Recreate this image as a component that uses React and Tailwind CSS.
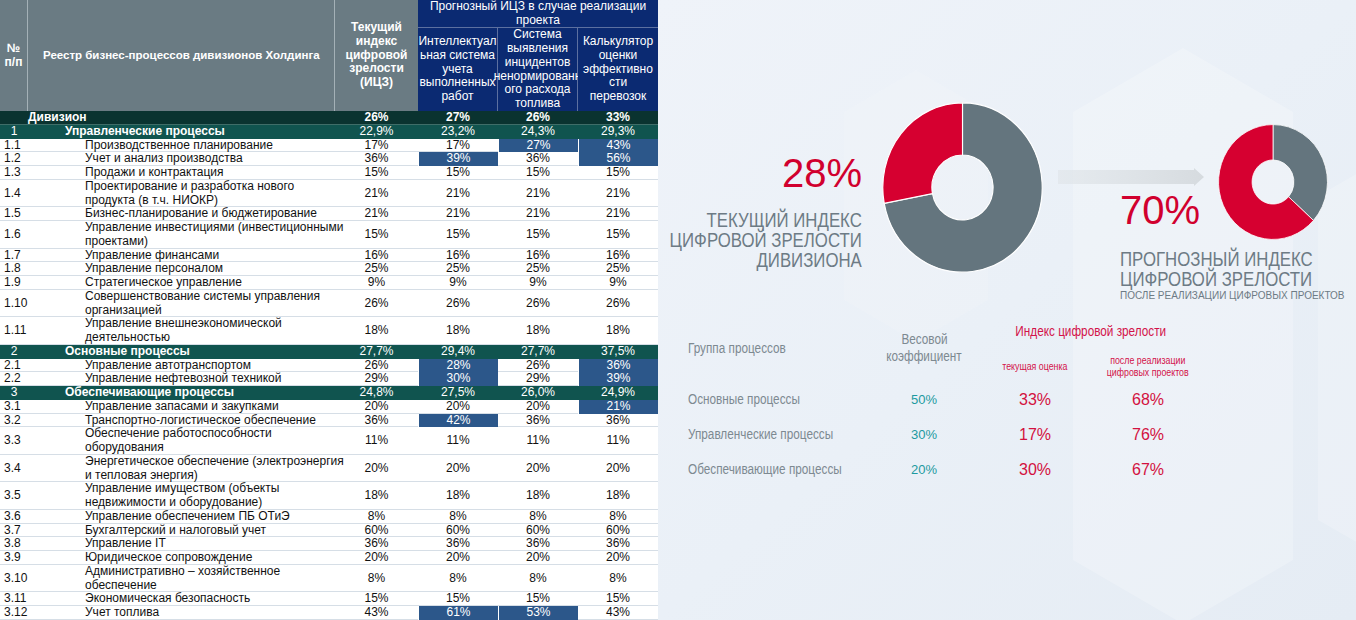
import React from 'react'

const ARIAL = { fontFamily: "'Liberation Sans', Arial, sans-serif" }

const rows = [
  { kind: 'div', name: 'Дивизион', v: ['26%', '27%', '26%', '33%'] },
  { kind: 'grp', n: '1', name: 'Управленческие процессы', v: ['22,9%', '23,2%', '24,3%', '29,3%'] },
  { n: '1.1', name: ['Производственное планирование'], v: ['17%', '17%', '27%', '43%'], hl: [2, 3] },
  { n: '1.2', name: ['Учет и анализ производства'], v: ['36%', '39%', '36%', '56%'], hl: [1, 3] },
  { n: '1.3', name: ['Продажи и контрактация'], v: ['15%', '15%', '15%', '15%'] },
  { n: '1.4', name: ['Проектирование и разработка нового', 'продукта (в т.ч. НИОКР)'], v: ['21%', '21%', '21%', '21%'] },
  { n: '1.5', name: ['Бизнес-планирование и бюджетирование'], v: ['21%', '21%', '21%', '21%'] },
  { n: '1.6', name: ['Управление инвестициями (инвестиционными', 'проектами)'], v: ['15%', '15%', '15%', '15%'] },
  { n: '1.7', name: ['Управление финансами'], v: ['16%', '16%', '16%', '16%'] },
  { n: '1.8', name: ['Управление персоналом'], v: ['25%', '25%', '25%', '25%'] },
  { n: '1.9', name: ['Стратегическое управление'], v: ['9%', '9%', '9%', '9%'] },
  { n: '1.10', name: ['Совершенствование системы управления', 'организацией'], v: ['26%', '26%', '26%', '26%'] },
  { n: '1.11', name: ['Управление внешнеэкономической', 'деятельностью'], v: ['18%', '18%', '18%', '18%'] },
  { kind: 'grp', n: '2', name: 'Основные процессы', v: ['27,7%', '29,4%', '27,7%', '37,5%'] },
  { n: '2.1', name: ['Управление автотранспортом'], v: ['26%', '28%', '26%', '36%'], hl: [1, 3] },
  { n: '2.2', name: ['Управление нефтевозной техникой'], v: ['29%', '30%', '29%', '39%'], hl: [1, 3] },
  { kind: 'grp', n: '3', name: 'Обеспечивающие процессы', v: ['24,8%', '27,5%', '26,0%', '24,9%'] },
  { n: '3.1', name: ['Управление запасами и закупками'], v: ['20%', '20%', '20%', '21%'], hl: [3] },
  { n: '3.2', name: ['Транспортно-логистическое обеспечение'], v: ['36%', '42%', '36%', '36%'], hl: [1] },
  { n: '3.3', name: ['Обеспечение работоспособности', 'оборудования'], v: ['11%', '11%', '11%', '11%'] },
  { n: '3.4', name: ['Энергетическое обеспечение (электроэнергия', 'и тепловая энергия)'], v: ['20%', '20%', '20%', '20%'] },
  { n: '3.5', name: ['Управление имуществом (объекты', 'недвижимости и оборудование)'], v: ['18%', '18%', '18%', '18%'] },
  { n: '3.6', name: ['Управление обеспечением ПБ ОТиЭ'], v: ['8%', '8%', '8%', '8%'] },
  { n: '3.7', name: ['Бухгалтерский и налоговый учет'], v: ['60%', '60%', '60%', '60%'] },
  { n: '3.8', name: ['Управление IT'], v: ['36%', '36%', '36%', '36%'] },
  { n: '3.9', name: ['Юридическое сопровождение'], v: ['20%', '20%', '20%', '20%'] },
  { n: '3.10', name: ['Административно – хозяйственное', 'обеспечение'], v: ['8%', '8%', '8%', '8%'] },
  { n: '3.11', name: ['Экономическая безопасность'], v: ['15%', '15%', '15%', '15%'] },
  { n: '3.12', name: ['Учет топлива'], v: ['43%', '61%', '53%', '43%'], hl: [1, 2] },
]

const groups = [
  { name: 'Основные процессы', w: '50%', cur: '33%', after: '68%' },
  { name: 'Управленческие процессы', w: '30%', cur: '17%', after: '76%' },
  { name: 'Обеспечивающие процессы', w: '20%', cur: '30%', after: '67%' },
]

// slide text is set in a narrow face; squeeze Liberation Sans to match
function Narrow({ children, left }) {
  return (
    <span className={`inline-block whitespace-nowrap scale-x-[0.84] ${left ? 'origin-left' : ''}`}>{children}</span>
  )
}

function TableRow({ r }) {
  if (r.kind === 'div') {
    return (
      <div className="grid grid-cols-[28px_307px_83px_80px_80px_80px] h-[13.75px] bg-[#0a3330] text-white font-bold border-b border-[#3f6d68]">
        <div />
        <div className="flex items-center">{r.name}</div>
        {r.v.map((v, i) => (
          <div key={i} className="flex items-center justify-center">{v}</div>
        ))}
      </div>
    )
  }
  if (r.kind === 'grp') {
    return (
      <div className="grid grid-cols-[28px_307px_83px_80px_80px_80px] h-[13.75px] bg-[#10544f] text-white">
        <div className="flex items-center justify-center">{r.n}</div>
        <div className="flex items-center pl-[37px] font-bold">{r.name}</div>
        {r.v.map((v, i) => (
          <div key={i} className="flex items-center justify-center">{v}</div>
        ))}
      </div>
    )
  }
  const tall = r.name.length > 1
  const hl = r.hl || []
  return (
    <div className={`grid grid-cols-[28px_307px_83px_80px_80px_80px] bg-white text-[#111] border-b border-[#d6dee6] ${tall ? 'h-[27.5px]' : 'h-[13.75px]'}`}>
      <div className="flex items-center pl-[4px]">{r.n}</div>
      <div className="flex flex-col justify-center pl-[57px] whitespace-nowrap">
        {r.name.map((t) => (
          <span key={t}>{t}</span>
        ))}
      </div>
      {r.v.map((v, i) =>
        hl.includes(i) ? (
          <div key={i} className="flex items-center justify-center bg-[#2c578a] text-white border-l border-white">{v}</div>
        ) : (
          <div key={i} className="flex items-center justify-center">{v}</div>
        )
      )}
    </div>
  )
}

function ProcessTable() {
  return (
    <div className="w-[658px] shrink-0 text-[12px] leading-[13.75px] bg-white" style={ARIAL}>
      {/* header */}
      <div className="grid grid-cols-[28px_307px_83px_80px_80px_80px] grid-rows-[28px_83px] text-white">
        <div className="row-span-2 bg-[#6a7b83] border-r border-[#a4b1b7] flex flex-col items-center justify-center font-bold">
          <span>№</span>
          <span>п/п</span>
        </div>
        <div className="row-span-2 bg-[#6a7b83] border-r border-[#a4b1b7] flex items-center pl-[15px] font-bold text-[11.5px]">
          Реестр бизнес-процессов дивизионов Холдинга
        </div>
        <div className="row-span-2 bg-[#6a7b83] flex flex-col items-center justify-center font-bold">
          <span>Текущий</span>
          <span>индекс</span>
          <span>цифровой</span>
          <span>зрелости</span>
          <span>(ИЦЗ)</span>
        </div>
        <div className="col-span-3 bg-[#0b2a72] border-b border-[#5c70a0] flex flex-col items-center justify-center">
          <span>Прогнозный ИЦЗ в случае реализации</span>
          <span>проекта</span>
        </div>
        <div className="bg-[#0b2a72] border-r border-[#5c70a0] flex flex-col items-center justify-center text-center">
          <span>Интеллектуал</span>
          <span>ьная система</span>
          <span>учета</span>
          <span>выполненных</span>
          <span>работ</span>
        </div>
        <div className="bg-[#0b2a72] border-r border-[#5c70a0] flex flex-col items-center justify-center text-center whitespace-nowrap">
          <span>Система</span>
          <span>выявления</span>
          <span>инцидентов</span>
          <span>ненормированн</span>
          <span>ого расхода</span>
          <span>топлива</span>
        </div>
        <div className="bg-[#0b2a72] flex flex-col items-center justify-center text-center">
          <span>Калькулятор</span>
          <span>оценки</span>
          <span>эффективно</span>
          <span>сти</span>
          <span>перевозок</span>
        </div>
      </div>
      {rows.map((r, i) => (
        <TableRow key={i} r={r} />
      ))}
    </div>
  )
}

function seg(a0, a1, R = 99, r = 38) {
  const p = (rad, a) => {
    const t = (a * Math.PI) / 180
    return `${(100 + rad * Math.sin(t)).toFixed(2)} ${(100 - rad * Math.cos(t)).toFixed(2)}`
  }
  const large = a1 - a0 > 180 ? 1 : 0
  return `M${p(R, a0)} A${R} ${R} 0 ${large} 1 ${p(R, a1)} L${p(r, a1)} A${r} ${r} 0 ${large} 0 ${p(r, a0)} Z`
}

function Donut({ w, h, grayEnd, className }) {
  return (
    <svg width={w} height={h} viewBox="0 0 200 200" preserveAspectRatio="none" className={`shrink-0 ${className}`}>
      <path d={seg(0, grayEnd)} fill="#64757e" stroke="#ffffff" strokeWidth="1.4" />
      <path d={seg(grayEnd, 360)} fill="#d60030" stroke="#ffffff" strokeWidth="1.4" />
    </svg>
  )
}

function Arrow() {
  return (
    <svg width="146" height="20" viewBox="0 0 146 20" className="block mt-[43px]">
      <defs>
        <linearGradient id="arrowFill" x1="0" x2="1" y1="0" y2="0">
          <stop offset="0" stopColor="#dfe4e8" stopOpacity="0.6" />
          <stop offset="1" stopColor="#d6dbdf" />
        </linearGradient>
      </defs>
      <path d="M0 3 H136 V1 L146 10 L136 19 V17 H0 Z" fill="url(#arrowFill)" />
    </svg>
  )
}

function Backdrop() {
  return (
    <svg className="absolute inset-0 pointer-events-none" width="698" height="620" viewBox="0 0 698 620">
      <polygon points="525,48 635,112 635,560 525,624 415,560 415,112" fill="#ffffff" opacity="0.22" />
      <polygon points="258,70 330,112 330,300 258,342 186,300 186,112" fill="#ffffff" opacity="0.1" />
      <polygon points="740,150 820,196 820,520 740,566 660,520 660,196" fill="#ffffff" opacity="0.2" />
    </svg>
  )
}

function MaturityPanel() {
  return (
    <div className="relative w-[698px] h-[620px] overflow-hidden bg-gradient-to-br from-[#eff3f9] via-[#eaf0f7] to-[#e5ecf4]" style={ARIAL}>
      <Backdrop />
      <div className="relative">
        {/* top: current and forecast donuts */}
        <div className="flex items-start">
          <div className="ml-[4px] w-[200px] pt-[153px] flex flex-col items-end text-right">
            <div className="text-[40px] leading-[40px] text-[#d1002e]">28%</div>
            <div className="mt-[17px] w-max text-[20px] leading-[20px] text-[#6d7b85] whitespace-nowrap origin-right scale-x-[0.84]">
              <div>ТЕКУЩИЙ ИНДЕКС</div>
              <div>ЦИФРОВОЙ ЗРЕЛОСТИ</div>
              <div>ДИВИЗИОНА</div>
            </div>
          </div>
          <Donut w={161} h={171} grayEnd={259.2} className="ml-[20px] mt-[102px]" />
          <div className="ml-[15px] mt-[124px] flex flex-col">
            <div className="flex items-start">
              <div className="w-[160px]">
                <Arrow />
                <div className="ml-[62px] mt-[3px] text-[40px] leading-[40px] text-[#d1002e]">70%</div>
              </div>
              <Donut w={110} h={116} grayEnd={132} />
            </div>
            <div className="ml-[62px] mt-[9px] text-[#6d7b85]">
              <div className="text-[20px] leading-[20px] whitespace-nowrap origin-left scale-x-[0.84]">
                <div>ПРОГНОЗНЫЙ ИНДЕКС</div>
                <div>ЦИФРОВОЙ ЗРЕЛОСТИ</div>
              </div>
              <div className="mt-[2px] text-[10px] leading-[10px] whitespace-nowrap">ПОСЛЕ РЕАЛИЗАЦИИ ЦИФРОВЫХ ПРОЕКТОВ</div>
            </div>
          </div>
        </div>

        {/* weights table */}
        <div className="ml-[30px] mt-[19px] grid grid-cols-[182px_108px_114px_112px]">
          <div className="h-[62px] pt-[20px] text-[14px] leading-[16px] text-[#7d8991]">
            <Narrow left>Группа процессов</Narrow>
          </div>
          <div className="h-[62px] pt-[11px] text-center text-[14px] leading-[17px] text-[#7d8991]">
            <div><Narrow>Весовой</Narrow></div>
            <div><Narrow>коэффициент</Narrow></div>
          </div>
          <div className="col-span-2 h-[62px] pt-[3px] text-[#d3134a]">
            <div className="text-center text-[14px] leading-[16px]"><Narrow>Индекс цифровой зрелости</Narrow></div>
            <div className="mt-[15px] h-[24px] grid grid-cols-2 items-center text-center text-[10.5px] leading-[12px]">
              <div><Narrow>текущая оценка</Narrow></div>
              <div>
                <div><Narrow>после реализации</Narrow></div>
                <div><Narrow>цифровых проектов</Narrow></div>
              </div>
            </div>
          </div>
          {groups.map((g) => (
            <React.Fragment key={g.name}>
              <div className="h-[35px] flex items-center text-[14px] text-[#7d8991]"><Narrow left>{g.name}</Narrow></div>
              <div className="h-[35px] flex items-center justify-center text-[13px] text-[#1d9aa0]">{g.w}</div>
              <div className="h-[35px] flex items-center justify-center text-[16px] text-[#d3113f]">{g.cur}</div>
              <div className="h-[35px] flex items-center justify-center text-[16px] text-[#d3113f]">{g.after}</div>
            </React.Fragment>
          ))}
        </div>
      </div>
    </div>
  )
}

export default function App() {
  return (
    <div className="flex w-[1356px] h-[620px] overflow-hidden bg-[#eaf0f7]">
      <ProcessTable />
      <MaturityPanel />
    </div>
  )
}
